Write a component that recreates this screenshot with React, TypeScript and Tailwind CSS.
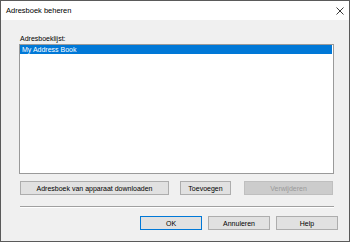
export default function App() {
  return (
    <div className="w-[350px] h-[242px] border border-[#5a5a5a] flex flex-col font-['Liberation_Sans',Arial,sans-serif] text-[7px] text-black leading-[9px]">
      {/* title bar */}
      <div className="h-[19px] bg-white flex items-center justify-between pl-[5px] pr-[5px]">
        <span className="text-[7.5px]">Adresboek beheren</span>
        <svg width="8" height="8" viewBox="0 0 8 8" className="text-[#222]">
          <path d="M0.5 0.5 L7.5 7.5 M7.5 0.5 L0.5 7.5" stroke="currentColor" strokeWidth="0.9" />
        </svg>
      </div>

      {/* body */}
      <div className="flex-1 bg-[#f0f0f0] pl-[18px] pt-[14px] flex flex-col">
        <div className="ml-[1px] h-[9px]">Adresboeklijst:</div>
        <div className="mt-[1px] w-[315px] h-[130px] bg-white border border-[#9a9a9a] pr-[1px]">
          <div className="h-[9px] bg-[#0078d7] text-white pl-[2px]">My Address Book</div>
        </div>

        <div className="mt-[7px] h-[14px] flex ml-[1px]">
          <button className="w-[149px] bg-[#e1e1e1] border border-[#adadad]">
            Adresboek van apparaat downloaden
          </button>
          <button className="ml-[11px] w-[51px] bg-[#e1e1e1] border border-[#adadad]">
            Toevoegen
          </button>
          <button className="ml-[13px] w-[89px] bg-[#cccccc] border border-[#bfbfbf] text-[#9a9a9a]">
            Verwijderen
          </button>
        </div>

        <div className="mt-[11px] w-[314px] h-[2px] border-t border-[#a0a0a0] border-b border-b-white ml-[1px]" />

        <div className="mt-[8px] h-[14px] flex ml-[121px]">
          <button className="w-[62px] bg-[#e1e1e1] border border-[#0078d7]">OK</button>
          <button className="ml-[6px] w-[62px] bg-[#e1e1e1] border border-[#adadad]">Annuleren</button>
          <button className="ml-[6px] w-[62px] bg-[#e1e1e1] border border-[#adadad]">Help</button>
        </div>
      </div>
    </div>
  );
}
